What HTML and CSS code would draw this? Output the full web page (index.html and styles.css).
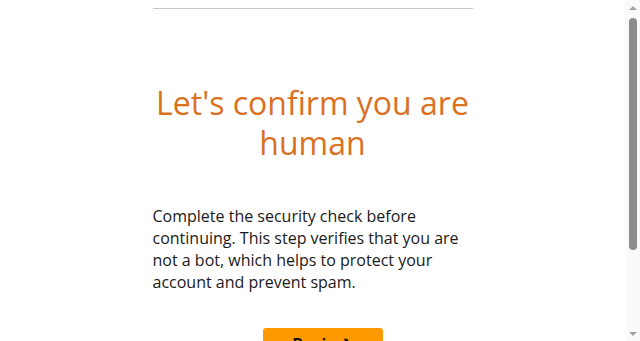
FILE: index.html
```html
<!DOCTYPE html>
<html lang="en">
<head>
<meta charset="utf-8">
<title>Let's confirm you are human</title>
<link rel="stylesheet" href="styles.css">
</head>
<body>
<main class="page">
  <div class="rule"></div>
  <h1 class="title">Let's confirm you are human</h1>
  <p class="lead">Complete the security check before continuing. This step verifies that you are not a bot, which helps to protect your account and prevent spam.</p>
  <div class="actions">
    <button class="begin" type="button">Begin <span class="chev">&#x276F;</span></button>
  </div>
</main>
<div class="scrollbar" aria-hidden="true">
  <span class="sb-arrow sb-up"></span>
  <span class="sb-track"><span class="sb-thumb"></span></span>
  <span class="sb-arrow sb-down"></span>
</div>
</body>
</html>
```
FILE: styles.css
```css
html, body {
  margin: 0;
  padding: 0;
  background: #ffffff;
}
body {
  font-family: "Open Sans", "Noto Sans", sans-serif;
  color: #1a1a1a;
  padding-right: 15px;
}
.page {
  width: 320px;
  margin: 0 auto;
  padding: 8px 0 116px;
}
.rule {
  height: 1px;
  background: #c8c8c8;
}
.title {
  margin: 74px 0 0;
  font-size: 32px;
  line-height: 40px;
  font-weight: 400;
  color: #d9711f;
  text-align: center;
}
.lead {
  margin: 42px 0 0;
  font-size: 16px;
  line-height: 22px;
}
.actions {
  display: flex;
  justify-content: flex-start;
  padding-left: 110px;
  margin-top: 35px;
}
.begin {
  width: 120px;
  height: 44px;
  border: 0;
  border-radius: 3px;
  background: #ff9900;
  color: #111;
  font-family: "Open Sans", sans-serif;
  font-size: 16px;
  font-weight: 700;
  line-height: 22px;
  padding: 5px 0 0;
  display: flex;
  align-items: flex-start;
  justify-content: center;
  gap: 5px;
  cursor: pointer;
}
.chev {
  font-size: 13px;
}
.scrollbar {
  position: fixed;
  top: 0;
  right: 0;
  width: 15px;
  height: 100vh;
  background: #fafafa;
  display: flex;
  flex-direction: column;
  align-items: center;
}
.sb-arrow {
  flex: 0 0 15px;
  width: 15px;
  display: flex;
  align-items: center;
  justify-content: center;
}
.sb-arrow::before {
  content: "";
  width: 0;
  height: 0;
  border-left: 4px solid transparent;
  border-right: 4px solid transparent;
}
.sb-up::before {
  border-bottom: 4px solid #a3a3a3;
}
.sb-down::before {
  border-top: 4px solid #a3a3a3;
}
.sb-track {
  flex: 1;
  width: 15px;
  display: flex;
  justify-content: center;
  padding-top: 3px;
}
.sb-thumb {
  width: 8px;
  height: 232px;
  border-radius: 4px;
  background: #8c8c8c;
}
```
